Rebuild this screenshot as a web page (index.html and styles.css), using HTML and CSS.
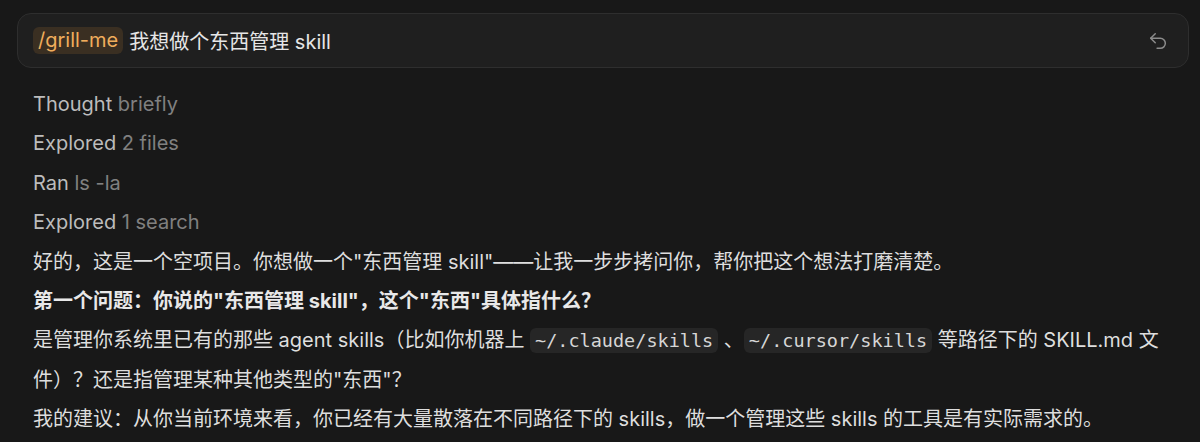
FILE: index.html
```html
<!doctype html>
<html lang="zh-CN">
<head>
	<meta charset="UTF-8">
	<title>grill-me</title>
	<link rel="stylesheet" href="styles.css">
</head>
<body>
	<div class="prompt">
		<div class="prompt-text">
			<span class="command">/grill-me</span>
			<span>我想做个东西管理 skill</span>
		</div>
		<button class="undo" title="Undo">
			<svg width="22" height="22" viewBox="0 0 24 24" fill="none" stroke="currentColor" stroke-width="1.6" stroke-linecap="round" stroke-linejoin="round">
				<path d="M9 14 4 9l5-5"></path>
				<path d="M4 9h10.5a5.5 5.5 0 0 1 5.5 5.5a5.5 5.5 0 0 1-5.5 5.5H11"></path>
			</svg>
		</button>
	</div>

	<div class="thread">
		<div class="step">Thought <span class="detail">briefly</span></div>
		<div class="step">Explored <span class="detail">2 files</span></div>
		<div class="step">Ran <span class="detail">ls -la</span></div>
		<div class="step">Explored <span class="detail">1 search</span></div>

		<p>好的，这是一个空项目。你想做一个"东西管理 skill"——让我一步步拷问你，帮你把这个想法打磨清楚。</p>
		<p><strong>第一个问题：你说的"东西管理 skill"，这个"东西"具体指什么？</strong></p>
		<p>是管理你系统里已有的那些 agent skills（比如你机器上 <code>~/.claude/skills</code> 、<code>~/.cursor/skills</code> 等路径下的 SKILL.md 文件）？还是指管理某种其他类型的"东西"？</p>
		<p>我的建议：从你当前环境来看，你已经有大量散落在不同路径下的 skills，做一个管理这些 skills 的工具是有实际需求的。</p>
	</div>
</body>
</html>
```

FILE: styles.css
```css
html, body {
	margin: 0;
	padding: 0;
}

body {
	background: #181818;
	color: #dedede;
	font-family: "Inter", "Noto Sans CJK SC", sans-serif;
	font-size: 20px;
}

.prompt {
	display: flex;
	align-items: center;
	justify-content: space-between;
	height: 55px;
	box-sizing: border-box;
	margin: 13px 11px 0 17px;
	padding: 0 19px 0 15px;
	background: #1f1f1f;
	border: 1px solid #2e2e2e;
	border-radius: 14px;
}

.prompt-text {
	display: flex;
	align-items: center;
	gap: 6px;
	color: #e6e6e6;
}

.command {
	padding: 1px 5px;
	line-height: 25px;
	border-radius: 6px;
	background: #3a2f22;
	color: #f0ad5c;
}

.undo {
	display: flex;
	padding: 0;
	border: 0;
	background: none;
	color: #8c8c8c;
}

.thread {
	margin-top: 17px;
	padding: 0 30px 0 33px;
	line-height: 39.4px;
}

.step {
	color: #bcbcbc;
}

.step .detail {
	color: #808080;
}

.thread p {
	margin: 0;
}

.thread strong {
	font-weight: 700;
	color: #e8e8e8;
}

code {
	font-family: "DejaVu Sans Mono", "Liberation Mono", monospace;
	font-size: 18.5px;
	padding: 2px 5px;
	border-radius: 6px;
	background: #262626;
	color: #d6d6d6;
}
```
